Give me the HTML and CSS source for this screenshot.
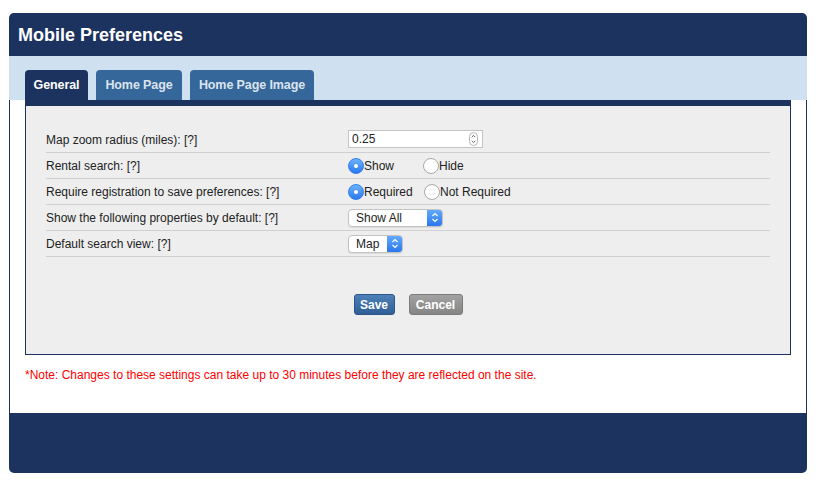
FILE: index.html
```html
<!DOCTYPE html>
<html lang="en">
<head>
  <meta charset="UTF-8" />
  <title>Mobile Preferences</title>
  <link rel="stylesheet" href="styles.css">
</head>
<body>
  <div class="panel">
    <div class="panel-head">
      <h1>Mobile Preferences</h1>
    </div>

    <div class="tabbar">
      <div class="tab active t1">General</div>
      <div class="tab t2">Home Page</div>
      <div class="tab t3">Home Page Image</div>
    </div>

    <div class="panel-body">
      <div class="tab-content">
        <div class="row">
          <div class="label">Map zoom radius (miles): [?]</div>
          <div class="control">
            <div class="number">
              <span>0.25</span>
              <svg class="spin" width="9" height="14" viewBox="0 0 9 14">
                <rect x="0.5" y="0.5" width="8" height="13" rx="4" fill="#fff" stroke="#b5b5b5"/>
                <path d="M2.7 5.2 L4.5 3.4 L6.3 5.2" fill="none" stroke="#555" stroke-width="0.9"/>
                <path d="M2.7 8.8 L4.5 10.6 L6.3 8.8" fill="none" stroke="#555" stroke-width="0.9"/>
              </svg>
            </div>
          </div>
        </div>
        <div class="row">
          <div class="label">Rental search: [?]</div>
          <div class="control">
            <label class="radio w75"><span class="dot on"></span>Show</label>
            <label class="radio"><span class="dot"></span>Hide</label>
          </div>
        </div>
        <div class="row">
          <div class="label">Require registration to save preferences: [?]</div>
          <div class="control">
            <label class="radio w76"><span class="dot on"></span>Required</label>
            <label class="radio"><span class="dot"></span>Not Required</label>
          </div>
        </div>
        <div class="row">
          <div class="label">Show the following properties by default: [?]</div>
          <div class="control">
            <div class="select wide">
              <span class="val">Show All</span>
              <span class="arrow">
                <svg width="8" height="11" viewBox="0 0 8 11"><path d="M1.5 4 L4 1.5 L6.5 4 M1.5 7 L4 9.5 L6.5 7" fill="none" stroke="#fff" stroke-width="1.2"/></svg>
              </span>
            </div>
          </div>
        </div>
        <div class="row">
          <div class="label">Default search view: [?]</div>
          <div class="control">
            <div class="select narrow">
              <span class="val">Map</span>
              <span class="arrow">
                <svg width="8" height="11" viewBox="0 0 8 11"><path d="M1.5 4 L4 1.5 L6.5 4 M1.5 7 L4 9.5 L6.5 7" fill="none" stroke="#fff" stroke-width="1.2"/></svg>
              </span>
            </div>
          </div>
        </div>

        <div class="buttons">
          <button class="btn save">Save</button>
          <button class="btn cancel">Cancel</button>
        </div>
      </div>

      <p class="note">*Note: Changes to these settings can take up to 30 minutes before they are reflected on the site.</p>
    </div>

    <div class="panel-foot"></div>
  </div>
</body>
</html>
```

FILE: styles.css
```css
body {
  margin: 0;
  padding: 0;
  background: #fff;
  font-family: 'Liberation Sans', Arial, sans-serif;
  color: #222;
}
.panel {
  margin: 13px 0 0 9px;
  width: 798px;
  border-radius: 5px;
  overflow: hidden;
  background: #fff;
}
.panel-head {
  height: 43px;
  background: #1c3360;
  padding-left: 9px;
}
.panel-head h1 {
  margin: 0;
  color: #fff;
  font-size: 18px;
  line-height: 44px;
  font-weight: bold;
}
.tabbar {
  height: 44px;
  box-sizing: border-box;
  background: #cfe1f0;
  padding: 14px 0 0 16px;
  display: flex;
  gap: 8px;
}
.tab {
  height: 30px;
  line-height: 30px;
  text-align: center;
  border-radius: 4px 4px 0 0;
  background: #35679a;
  color: #dbe4ee;
  font-size: 12.5px;
  font-weight: bold;
  letter-spacing: -0.1px;
}
.tab.t1 { width: 63px; }
.tab.t2 { width: 86px; }
.tab.t3 { width: 124px; }
.tab.active {
  background: #1c3360;
  color: #fff;
}
.panel-body {
  border-left: 1px solid #1c3360;
  border-right: 1px solid #1c3360;
  padding: 0 15px;
  height: 313px;
}
.tab-content {
  height: 255px;
  box-sizing: border-box;
  background: #eee;
  border: 1px solid #1c3360;
  border-top: 6px solid #1c3360;
  padding: 21px 20px 0 20px;
}
.row {
  display: flex;
  align-items: center;
  height: 26px;
  box-sizing: border-box;
  border-bottom: 1px solid #d0d0d0;
  font-size: 12px;
}
.label {
  width: 302px;
  color: #222;
}
.control {
  display: flex;
  align-items: center;
}
.number {
  width: 135px;
  height: 18px;
  box-sizing: border-box;
  border: 1px solid #c4c4c4;
  background: #fff;
  display: flex;
  align-items: center;
  justify-content: space-between;
  padding: 0 4px 0 3px;
  font-size: 12px;
  margin-top: -2px;
}
.spin {
  display: block;
}
.radio {
  display: flex;
  align-items: center;
  font-size: 12px;
  color: #222;
}
.radio.w75 { width: 75px; }
.radio.w76 { width: 76px; }
.dot {
  width: 14px;
  height: 14px;
  border-radius: 50%;
  background: #fff;
  border: 1px solid #a8a8a8;
  position: relative;
}
.dot.on {
  border-color: #2f7ef0;
  background: linear-gradient(#6cb3fb, #2a78ef);
}
.dot.on::after {
  content: "";
  position: absolute;
  left: 5px;
  top: 5px;
  width: 4px;
  height: 4px;
  border-radius: 50%;
  background: #fff;
}
.select {
  height: 18px;
  box-sizing: border-box;
  border: 1px solid #c3c3c3;
  border-radius: 4px;
  background: #fff;
  display: flex;
  align-items: center;
  justify-content: space-between;
  box-shadow: 0 1px 1px rgba(0,0,0,0.08);
  overflow: hidden;
}
.select.wide { width: 95px; }
.select.narrow { width: 55px; }
.select .val {
  padding-left: 7px;
  font-size: 12px;
}
.select .arrow {
  width: 15px;
  height: 100%;
  background: linear-gradient(#62aafb, #2a77ee);
  display: flex;
  align-items: center;
  justify-content: center;
}
.buttons {
  display: flex;
  justify-content: center;
  gap: 14px;
  margin-top: 37px;
}
.btn {
  height: 21px;
  border-radius: 3px;
  font-family: 'Liberation Sans', Arial, sans-serif;
  font-size: 12px;
  font-weight: bold;
  color: #fff;
  padding: 0;
  cursor: pointer;
}
.save {
  width: 41px;
  background: linear-gradient(#4d80b8, #2f5f96);
  border: 1px solid #2c5688;
}
.cancel {
  width: 54px;
  background: linear-gradient(#a2a2a2, #858585);
  border: 1px solid #7c7c7c;
}
.note {
  margin: 0;
  padding-top: 13px;
  font-size: 12px;
  color: #f00;
}
.panel-foot {
  height: 60px;
  background: #1c3360;
}
```
